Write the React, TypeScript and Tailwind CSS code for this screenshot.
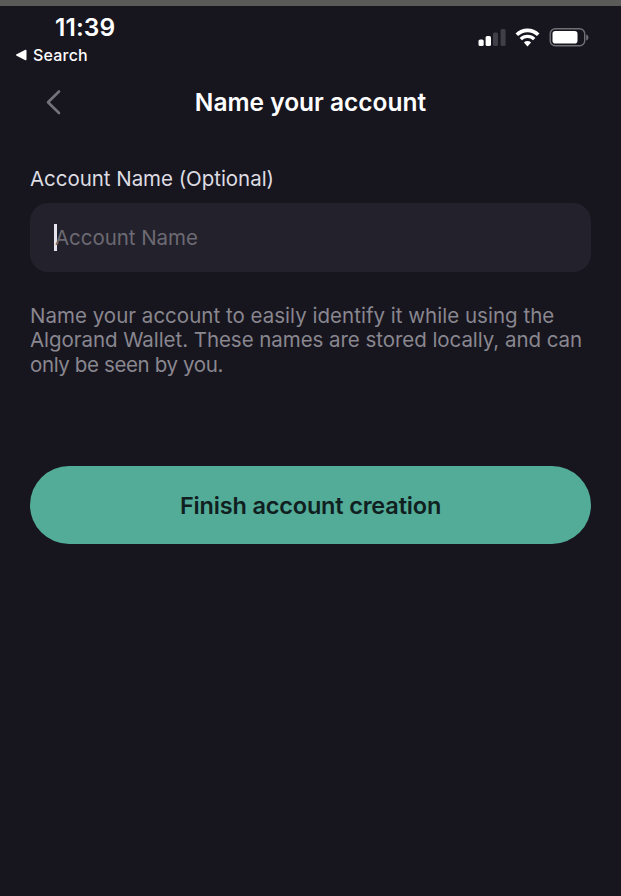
function StatusBar() {
  return (
    <div className="flex h-[66px] items-start justify-between pr-8 pl-[15px]">
      <div className="pt-2">
        <div className="ml-10 h-[26px] text-[24.5px] leading-[26px] font-semibold tracking-[0.1px] text-white">11:39</div>
        <div className="mt-px flex h-[27px] items-center text-[16px] font-medium tracking-[0.2px] text-white">
          <svg width="12" height="12" viewBox="0 0 12 12" className="mr-[6px]" fill="currentColor">
            <path d="M1.6 5.3 10.4.8c.6-.3 1.1 0 1.1.7v9c0 .7-.5 1-1.1.7L1.6 6.7c-.8-.4-.8-1 0-1.4Z" />
          </svg>
          Search
        </div>
      </div>
      <div className="flex items-start gap-2 pt-[22px]">
        <svg width="29" height="19" viewBox="0 0 29 19" fill="#fff">
          <rect x="0.5" y="11.5" width="5.2" height="6.5" rx="1.6" />
          <rect x="7.6" y="8" width="5.4" height="10" rx="1.6" />
          <rect x="15" y="4.5" width="5" height="13.5" rx="1.6" fill="#403e46" />
          <rect x="22.6" y="1" width="5" height="17" rx="1.6" fill="#403e46" />
        </svg>
        <svg width="25" height="19" viewBox="0 0 25 19" fill="none" stroke="#fff" strokeWidth="3.7">
          <path d="M1.8 6.7a15.3 15.3 0 0 1 21.4 0" />
          <path d="M5.8 11.1a9.6 9.6 0 0 1 13.4 0" strokeWidth="3.4" />
          <path d="M12.5 18.4 8.9 14.5a5.2 5.2 0 0 1 7.2 0Z" fill="#fff" stroke="none" />
        </svg>
        <svg width="41" height="20" viewBox="0 0 41 20">
          <rect x="2.2" y="0.8" width="34.5" height="17" rx="5" fill="none" stroke="#716f76" strokeWidth="1.4" />
          <rect x="4.5" y="3" width="25" height="12.6" rx="2.8" fill="#fff" />
          <path d="M38.2 6.5c1.7.6 2.2 1.7 2.2 3s-.5 2.4-2.2 3Z" fill="#716f76" />
        </svg>
      </div>
    </div>
  );
}

export default function App() {
  return (
    <div className="h-[896px] w-[621px] overflow-hidden border-t-[6px] border-[#5a5a58] bg-[#17151e] font-['Inter','Liberation_Sans',sans-serif]">
      <StatusBar />
      <header className="grid h-[61px] grid-cols-[165px_1fr_165px] items-center">
        <button aria-label="Back" className="-mt-px ml-[45px] w-4">
          <svg width="16" height="26" viewBox="0 0 16 26" fill="none" stroke="#74727a" strokeWidth="2.6" strokeLinecap="round" strokeLinejoin="round">
            <path d="M14 2.5 3 13.2 14 24" />
          </svg>
        </button>
        <h1 className="-mt-px text-center text-[24.5px] font-semibold whitespace-nowrap text-white">Name your account</h1>
      </header>
      <main className="px-[30px] pt-8">
        <label className="block h-[28px] text-[20.5px] leading-[28px] tracking-[-0.04px] whitespace-nowrap text-[#dddce2]">Account Name (Optional)</label>
        <div className="mt-[10px] flex h-[69px] items-center rounded-[18px] bg-[#23212b] pl-6">
          <div className="-mr-[3px] h-[27px] w-[3px] bg-[#e6e4ed]" />
          <span className="pt-0.5 pl-px text-[20.5px] tracking-[-0.05px] whitespace-nowrap text-[#6c6a73]">Account Name</span>
        </div>
        <p className="mt-8 text-[20.5px] leading-[24.4px] whitespace-nowrap text-[#89878f]">
          <span className="block tracking-[0.02px]">Name your account to easily identify it while using the</span>
          <span className="block tracking-[-0.05px]">Algorand Wallet. These names are stored locally, and can</span>
          <span className="block tracking-[-0.38px]">only be seen by you.</span>
        </p>
        <button className="mt-[88.8px] flex h-[78px] w-full items-center justify-center rounded-full bg-[#52ac98] pt-px text-[23.5px] font-semibold tracking-[-0.17px] whitespace-nowrap text-[#10201f]">
          Finish account creation
        </button>
      </main>
    </div>
  );
}
